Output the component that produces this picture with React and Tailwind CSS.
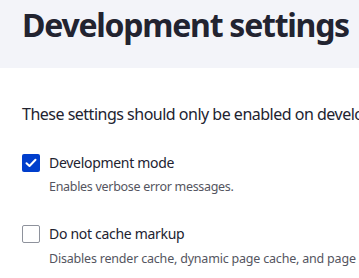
export default function App() {
  return (
    <div className="w-[359px] h-[278px] overflow-hidden bg-white text-[#222330]" style={{ fontFamily: '"Noto Sans", sans-serif' }}>
      <div className="h-[68px] bg-[#f3f4f9] pl-[22px] pt-[5px]">
        <h1 className="text-[32px] font-bold leading-[40px] whitespace-nowrap tracking-[-1.25px]">Development settings</h1>
      </div>
      <div className="pl-[22px] pt-[34px]">
        <p className="text-[16px] leading-[24px] whitespace-nowrap tracking-[-0.5px]">These settings should only be enabled on development environments.</p>
        <div className="mt-[27px] space-y-[28px]">
          <div>
            <label className="flex items-center gap-[9px]">
              <span className="w-[18px] h-[18px] rounded-[2px] bg-[#003ecc] flex items-center justify-center">
                <svg width="12" height="10" viewBox="0 0 12 10" fill="none">
                  <path d="M1.5 5.2 4.5 8 10.5 1.8" stroke="white" strokeWidth="2" strokeLinecap="round" strokeLinejoin="round" />
                </svg>
              </span>
              <span className="text-[14px] leading-[20px] whitespace-nowrap tracking-[-0.3px]">Development mode</span>
            </label>
            <p className="ml-[27px] mt-[5px] text-[12.5px] leading-[18px] text-[#545560] whitespace-nowrap tracking-[-0.3px]">Enables verbose error messages.</p>
          </div>
          <div>
            <label className="flex items-center gap-[9px]">
              <span className="w-[18px] h-[18px] rounded-[2px] border border-[#8e929c] bg-white" />
              <span className="text-[14px] leading-[20px] whitespace-nowrap tracking-[-0.3px]">Do not cache markup</span>
            </label>
            <p className="ml-[27px] mt-[6px] text-[12.5px] leading-[18px] text-[#545560] whitespace-nowrap tracking-[-0.2px]">Disables render cache, dynamic page cache, and page cache.</p>
          </div>
        </div>
      </div>
    </div>
  );
}
